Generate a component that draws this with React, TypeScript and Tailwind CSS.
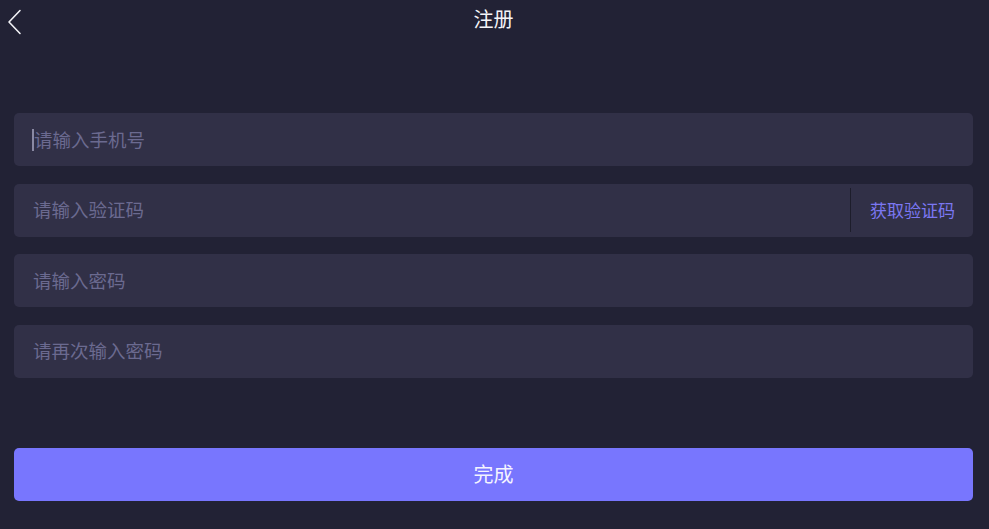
import { useState } from "react";

const font = { fontFamily: '"Noto Sans CJK SC", "Noto Sans", sans-serif' };

function Field({ placeholder, caret, children }: { placeholder: string; caret?: boolean; children?: React.ReactNode }) {
  return (
    <div className="flex h-[53px] items-center rounded-[5px] bg-[#313047]">
      <div className="flex flex-1 items-center pl-[18px]">
        {caret && <span className="-mr-[1px] h-[22px] w-[2px] bg-[#8a89a3]" />}
        <span className="pl-[1px] text-[18.5px] text-[#6b6a90]">{placeholder}</span>
      </div>
      {children}
    </div>
  );
}

export default function App() {
  const [sent, setSent] = useState(false);
  return (
    <div className="flex h-[529px] w-full flex-col bg-[#222235] pl-[14px] pr-[16px] text-white" style={font}>
      <header className="relative flex h-[38px] items-center justify-center">
        <button className="absolute -left-[11px] top-[5px] p-1">
          <svg width="16" height="26" viewBox="0 0 16 26" fill="none">
            <path d="M13 1.5 L2 13 L13 24.5" stroke="#f2f2f6" strokeWidth="1.6" strokeLinecap="round" strokeLinejoin="round" />
          </svg>
        </button>
        <h1 className="text-[20px] text-[#f4f4f8]">注册</h1>
      </header>

      <div className="mt-[75px] flex flex-col gap-[17.6px]">
        <Field placeholder="请输入手机号" caret />
        <Field placeholder="请输入验证码">
          <div className="h-[44px] w-px bg-[#1d1d2b]" />
          <button className="pl-[19px] pr-[18px] text-[17px] text-[#7b77f2]" onClick={() => setSent(!sent)}>
            获取验证码
          </button>
        </Field>
        <Field placeholder="请输入密码" />
        <Field placeholder="请再次输入密码" />
      </div>

      <button className="mt-[70px] h-[53px] rounded-[5px] bg-[#7876fe] text-[20px] text-[#f4f4ff]">完成</button>
    </div>
  );
}
